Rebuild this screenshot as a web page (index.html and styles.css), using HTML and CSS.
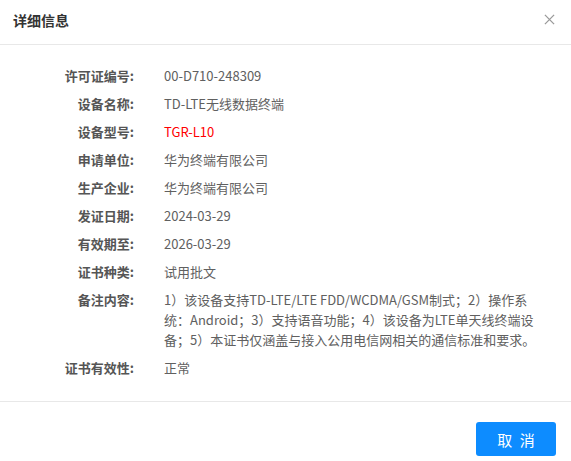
FILE: index.html
```html
<!DOCTYPE html>
<html>

<head>
    <title>详细信息</title>
    <meta name="viewport" content="width=device-width,initial-scale=1">
    <link rel="stylesheet" href="styles.css">
</head>

<body>
    <div class="dialog">
        <div class="dialog-header">
            <span class="dialog-title">详细信息</span>
            <span class="dialog-close">
                <svg viewBox="0 0 12 12" width="11" height="11">
                    <path d="M1 1 L11 11 M11 1 L1 11" stroke="#999" stroke-width="1.4" fill="none" />
                </svg>
            </span>
        </div>

        <div class="dialog-body">
            <div class="row"><span class="label">许可证编号:</span><span class="value">00-D710-248309</span></div>
            <div class="row"><span class="label">设备名称:</span><span class="value">TD-LTE无线数据终端</span></div>
            <div class="row"><span class="label">设备型号:</span><span class="value red">TGR-L10</span></div>
            <div class="row"><span class="label">申请单位:</span><span class="value">华为终端有限公司</span></div>
            <div class="row"><span class="label">生产企业:</span><span class="value">华为终端有限公司</span></div>
            <div class="row"><span class="label">发证日期:</span><span class="value">2024-03-29</span></div>
            <div class="row"><span class="label">有效期至:</span><span class="value">2026-03-29</span></div>
            <div class="row"><span class="label">证书种类:</span><span class="value">试用批文</span></div>
            <div class="row"><span class="label">备注内容:</span><span class="value">1）该设备支持TD-LTE/LTE FDD/WCDMA/GSM制式；2）操作系统：Android；3）支持语音功能；4）该设备为LTE单天线终端设备；5）本证书仅涵盖与接入公用电信网相关的通信标准和要求。</span></div>
            <div class="row"><span class="label">证书有效性:</span><span class="value">正常</span></div>
        </div>

        <div class="dialog-footer">
            <button class="btn-primary">取 消</button>
        </div>
    </div>
</body>

</html>
```

FILE: styles.css
```css
body {
    margin: 0;
    font-family: "Noto Sans CJK SC", sans-serif;
    background-color: #fff;
}

.dialog {
    width: 571px;
}

/* header with title and close cross */
.dialog-header {
    height: 44px;
    display: flex;
    align-items: center;
    justify-content: space-between;
    padding: 0 16px 0 13px;
    border-bottom: 1px solid #e8e8e8;
}

.dialog-title {
    font-size: 14px;
    font-weight: bold;
    color: #333;
    margin-top: -5px;
}

.dialog-close {
    display: flex;
    margin-top: -5px;
}

.dialog-body {
    padding: 21px 0 15px 0;
}

.row {
    display: flex;
    gap: 30px;
    font-size: 13px;
    line-height: 20px;
    margin-bottom: 8px;
}

.label {
    width: 134px;
    flex-shrink: 0;
    text-align: right;
    font-weight: bold;
    color: #555;
}

.value {
    width: 373px;
    color: #606060;
}

.value.red {
    color: #ff0000;
}

.dialog-footer {
    border-top: 1px solid #e8e8e8;
    display: flex;
    justify-content: flex-end;
    padding: 20px 15px 6px 0;
}

.btn-primary {
    width: 80px;
    height: 34px;
    border: none;
    border-radius: 3px;
    background-color: #0d8cff;
    color: #fff;
    font-family: "Noto Sans CJK SC", sans-serif;
    font-size: 15px;
    letter-spacing: 2px;
    padding: 0 0 0 2px;
    cursor: pointer;
}
```
